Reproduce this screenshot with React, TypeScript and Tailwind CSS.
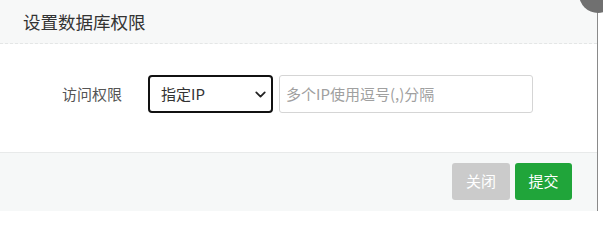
import { ChevronDown } from 'lucide-react'

const FONT = '[font-family:"Noto_Sans_CJK_SC","Noto_Sans",sans-serif]'

export default function App() {
    return (
        <div className={`relative w-[603px] h-[211px] bg-white overflow-hidden ${FONT}`}>
            <div className="w-[598px] h-full border-r border-[#8a8a8a] flex flex-col">
                {/* Header */}
                <div className="h-[44px] shrink-0 bg-[#f7f8f8] border-b border-dashed border-[#e4e6e6] flex items-center pl-[23px]">
                    <h1 className="text-[17.5px] text-[#333] leading-none">设置数据库权限</h1>
                </div>

                {/* Body */}
                <div className="h-[108px] shrink-0 pt-[31px]">
                    <div className="flex items-center">
                        <label className="w-[148px] pr-[26px] text-right text-[15px] text-[#555]">访问权限</label>
                        <div className="w-[125px] h-[38px] border-2 border-[#111] rounded-[4px] flex items-center justify-between pl-[11px] pr-[2px]">
                            <span className="text-[15px] text-[#333]">指定IP</span>
                            <ChevronDown className="w-[17px] h-[17px] text-[#222]" strokeWidth={2.5} />
                        </div>
                        <div className="ml-[6px] w-[254px] h-[38px] border border-[#d5d5d5] rounded-[3px] flex items-center px-[6px]">
                            <span className="text-[15px] text-[#a0a0a0]">多个IP使用逗号(,)分隔</span>
                        </div>
                    </div>
                </div>

                {/* Footer */}
                <div className="flex-1 bg-[#f6f8f8] border-t border-[#e8eaea] flex justify-end items-start pt-[10px] pr-[25px] gap-[5px]">
                    <button className="w-[58px] h-[37px] rounded-[3px] bg-[#cbcbcb] text-white text-[15px]">关闭</button>
                    <button className="w-[57px] h-[37px] rounded-[3px] bg-[#20a53a] text-white text-[15px]">提交</button>
                </div>
            </div>

            {/* Close button, clipped */}
            <div className="absolute -top-[25px] -right-[14px] w-[38px] h-[38px] rounded-full bg-[#707070]" />
        </div>
    )
}
